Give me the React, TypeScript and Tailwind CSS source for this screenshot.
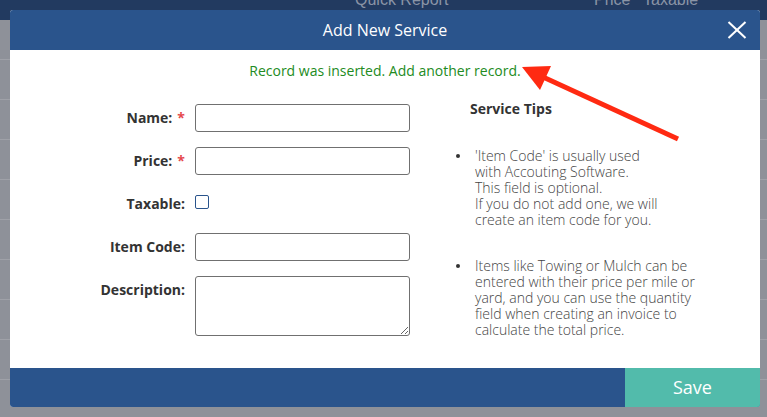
import React from "react";

const ROWS = Array.from({ length: 10 });

function Field({
  label,
  required,
  children,
  top,
}: {
  label: string;
  required?: boolean;
  children: React.ReactNode;
  top?: boolean;
}) {
  return (
    <div className={`flex ${top ? "items-start" : "items-center"}`}>
      <label
        className={`w-[185px] shrink-0 pr-[10px] text-right text-[14px] font-bold leading-5 text-[#333] ${
          top ? "pt-[4px]" : ""
        }`}
      >
        {label}
        {required && <span className="ml-[5px] text-[#e5484d]">*</span>}
      </label>
      {children}
    </div>
  );
}

function Bullet() {
  return (
    <span className="flex h-4 w-5 shrink-0 items-center pl-[1px]">
      <span className="h-[4px] w-[4px] rounded-full bg-[#333]" />
    </span>
  );
}

export default function App() {
  return (
    <div
      className="relative h-[417px] w-[767px] overflow-hidden bg-[#8e9199]"
      style={{ fontFamily: '"Open Sans", "Liberation Sans", sans-serif' }}
    >
      {/* page behind the modal */}
      <div className="relative h-5 bg-[#223a60] text-[16px] text-[#8a94a6]" style={{ fontFamily: '"Liberation Sans", Arial, sans-serif' }}>
        <span className="absolute left-[355px] top-[-12px]">Quick Report</span>
        <span className="absolute left-[594px] top-[-12px]">Price</span>
        <span className="absolute left-[643px] top-[-12px]">Taxable</span>
      </div>
      {ROWS.map((_, i) => (
        <div key={i} className="h-10 border-b border-[#9fa1a8]" />
      ))}

      {/* modal */}
      <div className="absolute left-[10px] top-[10px] flex h-[397px] w-[750px] flex-col overflow-hidden rounded-[3px] bg-white">
        <div className="relative flex h-10 shrink-0 items-center justify-center bg-[#2a548c]">
          <h2 className="text-[16px] text-white">Add New Service</h2>
          <button type="button" className="absolute right-[13px] top-[11px] text-white">
            <svg width="20" height="18" viewBox="0 0 20 18" fill="none" stroke="currentColor" strokeWidth="2">
              <line x1="1.5" y1="1" x2="18.5" y2="17" />
              <line x1="18.5" y1="1" x2="1.5" y2="17" />
            </svg>
          </button>
        </div>

        <div className="flex-1">
          <p className="pt-[11px] text-center text-[14px] leading-5 text-[#228b22]">
            Record was inserted. Add another record.
          </p>

          <div className="mt-[18px] flex">
            <div className="flex flex-col gap-[15px] pt-[5px]">
              <Field label="Name:" required>
                <input type="text" className="h-[28px] w-[215px] rounded-[3px] border border-[#707070] px-2 text-[14px]" />
              </Field>
              <Field label="Price:" required>
                <input type="text" className="h-[28px] w-[215px] rounded-[3px] border border-[#707070] px-2 text-[14px]" />
              </Field>
              <div className="flex h-[28px] items-center">
                <label className="w-[185px] shrink-0 pr-[10px] text-right text-[14px] font-bold leading-5 text-[#333]">
                  Taxable:
                </label>
                <input
                  type="checkbox"
                  className="mb-[4px] h-[14px] w-[14px] appearance-none rounded-[2px] border border-[#2a548c] bg-white"
                />
              </div>
              <Field label="Item Code:">
                <input type="text" className="h-[28px] w-[215px] rounded-[3px] border border-[#707070] px-2 text-[14px]" />
              </Field>
              <Field label="Description:" top>
                <textarea className="h-[60px] w-[215px] rounded-[3px] border border-[#707070] px-2 text-[14px]" />
              </Field>
            </div>

            <div className="ml-[45px]">
              <h3 className="ml-[15px] text-[14px] font-bold leading-5 text-[#333]">Service Tips</h3>
              <ul className="mt-[29px] flex flex-col gap-[30px] text-[14px] font-light leading-4 text-[#444]">
                <li className="flex">
                  <Bullet />
                  <span>
                    'Item Code' is usually used
                    <br />
                    with Accouting Software.
                    <br />
                    This field is optional.
                    <br />
                    If you do not add one, we will
                    <br />
                    create an item code for you.
                  </span>
                </li>
                <li className="flex">
                  <Bullet />
                  <span>
                    Items like Towing or Mulch can be
                    <br />
                    entered with their price per mile or
                    <br />
                    yard, and you can use the quantity
                    <br />
                    field when creating an invoice to
                    <br />
                    calculate the total price.
                  </span>
                </li>
              </ul>
            </div>
          </div>
        </div>

        <div className="flex h-[39px] shrink-0 justify-end bg-[#2a548c]">
          <button type="button" className="w-[135px] bg-[#52bbab] text-[18px] text-white">
            Save
          </button>
        </div>
      </div>

      {/* annotation arrow */}
      <svg className="pointer-events-none absolute left-0 top-0" width="767" height="417">
        <line x1="678" y1="139" x2="543" y2="77" stroke="#ff2a12" strokeWidth="5" />
        <polygon points="522,67 551,66 540,90" fill="#ff2a12" />
      </svg>
    </div>
  );
}
